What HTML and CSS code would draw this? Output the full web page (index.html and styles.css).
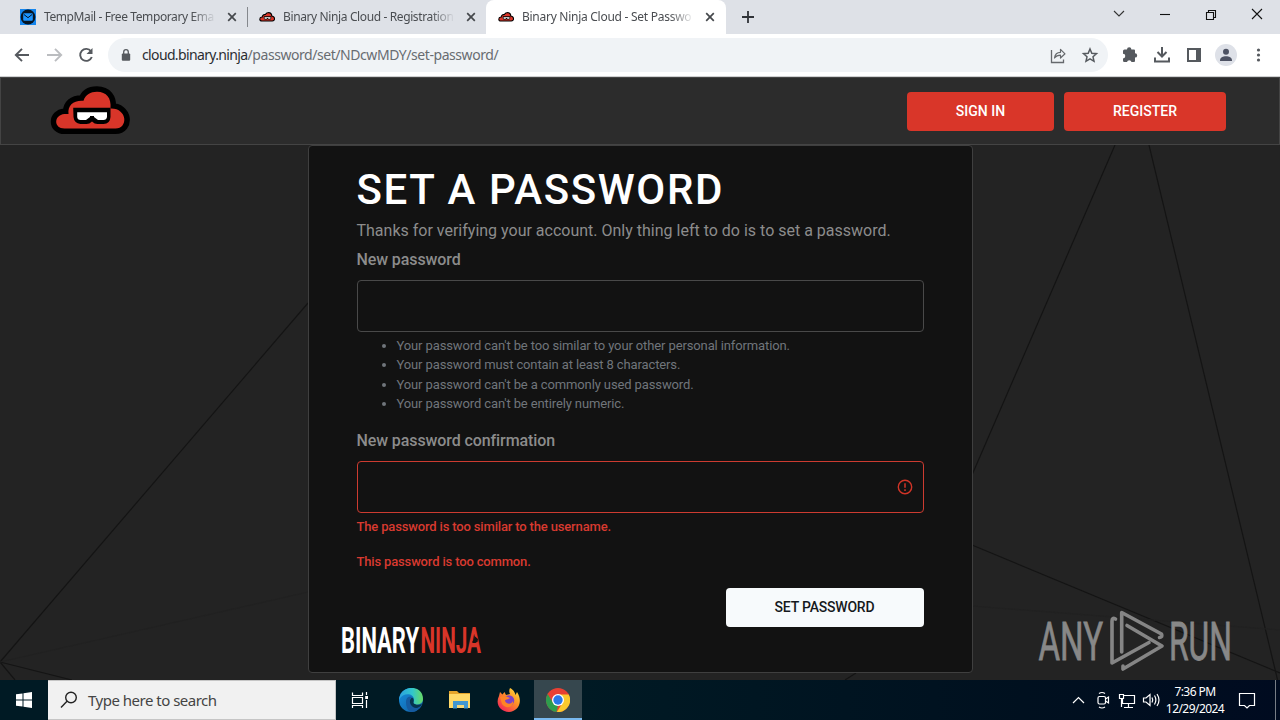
FILE: index.html
```html
<!DOCTYPE html>
<html lang="en">
<head>
<meta charset="utf-8">
<title>Binary Ninja Cloud - Set Password</title>
<link rel="stylesheet" href="styles.css">
</head>
<body>
<svg class="defs" width="0" height="0">
  <symbol id="cloud" viewBox="0 0 80 50">
    <path d="M15 42.500C4 42.500 4 29 15 28H19C18 19 24 14 34 14.700C36 8.500 41 5.700 47.500 5.700C57 5.700 62 12 61 22.500C78 22 79 42.500 66 42.500Z" fill="#d93529" stroke="#000" stroke-width="11" paint-order="stroke" stroke-linejoin="round"/>
    <path d="M23.700 21.700H61V31Q60.500 38 54 38H48Q45 38 42.500 35.500Q40 38 37 38H31Q24.500 37 24 31Z" fill="#000"/>
    <path d="M27.700 26.300H57.500V31Q57 34 54 34H48.500L44.500 31V30H40.500V31L36.500 34H31Q28 34 27.700 31Z" fill="#fff"/>
  </symbol>
  <symbol id="x" viewBox="0 0 10 10"><path d="M1.2 1.2L8.8 8.8M8.8 1.2L1.2 8.8" stroke="#45484c" stroke-width="1.7"/></symbol>
</svg>

<div class="tabs">
  <div class="tab first"><svg class="fav" viewBox="0 0 16 16"><path d="M0 0H16V16H0Z" fill="#1686ee"/><circle cx="8" cy="8" r="7.4" fill="#071523"/><rect x="3.2" y="4.3" width="9.6" height="7.4" rx="1" fill="#1c94ff"/><path d="M3.7 5.3L8 8.7L12.3 5.3" fill="none" stroke="#071523"/></svg><span class="tab-title t1">TempMail - Free Temporary Ema</span><svg class="close"><use href="#x"/></svg></div>
  <i class="divider"></i>
  <div class="tab"><svg class="fav"><use href="#cloud"/></svg><span class="tab-title t2">Binary Ninja Cloud - Registration</span><svg class="close"><use href="#x"/></svg></div>
  <div class="tab active"><svg class="fav"><use href="#cloud"/></svg><span class="tab-title t3">Binary Ninja Cloud - Set Passwo</span><svg class="close"><use href="#x"/></svg></div>
  <svg class="plus" viewBox="0 0 12 12"><path d="M6 0V12M0 6H12" stroke="#303338" stroke-width="1.8"/></svg>
  <svg class="winctl" viewBox="0 0 160 24" fill="none" stroke="#111" stroke-width="1.1"><path d="M4 9L9 14L14 9" stroke="#333"/><path d="M50 12.5H60"/><path d="M96.500 10.500H103.500V17.500H96.500ZM98.500 10.500V8.500H105.500V15.500H103.500"/><path d="M142 7L152 17M152 7L142 17"/></svg>
</div>

<div class="toolbar">
  <svg class="nav" viewBox="0 0 100 24" fill="none" stroke-width="1.9"><path d="M21 12H8M14 5.800L7.800 12L14 18.200" stroke="#55595e"/><path d="M39 12H53M47 5.800L53.200 12L47 18.200" stroke="#bbbdc0"/><path d="M83 8.300A6 6 0 1 0 83.800 14" stroke="#55595e"/><path d="M84.500 5V11H78.500Z" fill="#55595e"/></svg>
  <div class="omnibox">
    <svg class="lock" viewBox="0 0 10 12"><rect x=".8" y="4.500" width="8.400" height="7.300" rx="1" fill="#55595e"/><path d="M2.700 5V3A2.300 2.300 0 0 1 7.300 3V5" fill="none" stroke="#55595e" stroke-width="1.300"/></svg>
    <span class="url"><b>cloud.binary.ninja</b>/password/set/NDcwMDY/set-password/</span>
    <svg class="oicons" viewBox="0 0 50 20"><path d="M1.500 5V17.500H13.500V14.500" fill="none" stroke="#66696d" stroke-width="1.300"/><path d="M4.500 13C5 9 8 7.300 10.500 7.300V4.300L15 8.800L10.500 13V10.200C8 10.200 6 11 4.500 13Z" fill="none" stroke="#66696d" stroke-width="1.200" stroke-linejoin="round"/><path d="M40 4L41.800 8.300L46.500 8.700L43 11.800L44 16.300L40 13.900L36 16.300L37 11.800L33.500 8.700L38.200 8.300Z" fill="none" stroke="#55595e" stroke-width="1.500"/></svg>
  </div>
  <svg class="tools" viewBox="0 0 150 24"><path d="M1 8Q1 6.500 2.500 6.500H5A2.200 2.200 0 0 1 9.400 6.500H12Q13 6.500 13 7.500V10.200A2.200 2.200 0 0 1 13 14.600V18Q13 19 12 19H9.500A2.300 2.300 0 0 0 5 19H2.300Q1 19 1 17.500V15.400A2.300 2.300 0 0 0 1 10.800Z" fill="#55595e"/><g fill="none" stroke="#55595e" stroke-width="2"><path d="M40 4V13M35.500 9L40 13.500L44.500 9"/><path d="M33 14.500V18.500H47V14.500"/><path d="M66 6H78V18H66Z"/></g><path d="M74 5H79V19H74Z" fill="#55595e"/><circle cx="104" cy="12" r="11" fill="#dee1e8"/><circle cx="104" cy="8.800" r="3" fill="#4d5263"/><path d="M98 17.500C98 14.500 101 13.300 104 13.300S110 14.500 110 17.500V18H98Z" fill="#4d5263"/><g fill="#55595e"><circle cx="136.500" cy="7" r="1.600"/><circle cx="136.500" cy="12" r="1.600"/><circle cx="136.500" cy="17" r="1.600"/></g></svg>
</div>

<header class="site-header">
  <svg class="brand"><use href="#cloud"/></svg>
  <div class="actions"><a class="btn signin">SIGN IN</a><a class="btn register">REGISTER</a></div>
</header>

<main class="page">
  <svg class="mesh" viewBox="0 145 1280 535" fill="none" stroke="#141414" stroke-width="1.200"><path d="M308 303L0 662L72 680M0 662L15 680M1115 145L972 475M1149 145L1280 690M972 545L1280 673M856 673L845 680"/><path d="M0 662L308 592M972 606L1280 630" stroke="#212121"/></svg>
  <section class="card">
    <h1>SET A PASSWORD</h1>
    <p class="lead">Thanks for verifying your account. Only thing left to do is to set a password.</p>
    <label>New password</label>
    <div class="input"></div>
    <ul><li>Your password can't be too similar to your other personal information.</li><li>Your password must contain at least 8 characters.</li><li>Your password can't be a commonly used password.</li><li>Your password can't be entirely numeric.</li></ul>
    <label>New password confirmation</label>
    <div class="input invalid"><svg viewBox="0 0 16 16"><circle cx="8" cy="8" r="6.700" fill="none" stroke="#d13427" stroke-width="1.400"/><path d="M8 4.300V8.800M8 10.300V12" stroke="#d13427" stroke-width="1.500"/></svg></div>
    <p class="error">The password is too similar to the username.</p>
    <p class="error second">This password is too common.</p>
    <div class="submit-row"><a class="submit">SET PASSWORD</a></div>
    <svg class="wordmark" viewBox="0 0 142 30"><text x="0" y="28" textLength="78" lengthAdjust="spacingAndGlyphs" fill="#fff">BINARY</text><text x="79.500" y="28" textLength="60.500" lengthAdjust="spacingAndGlyphs" fill="#d93529">NINJA</text><path d="M131 17L134 14L133.500 11L137 14L136.500 17L133 18Z" fill="#121212"/></svg>
  </section>
  <svg class="anyrun" viewBox="1036 606 200 68"><g fill="#888" stroke="#888" stroke-width=".8"><text x="1038.500" y="659.500" textLength="64.500" lengthAdjust="spacingAndGlyphs">ANY</text><text x="1169" y="659.500" textLength="63" lengthAdjust="spacingAndGlyphs">RUN</text></g><g fill="none" stroke="#858585" stroke-width="3.600" stroke-linejoin="round" stroke-linecap="round"><path d="M1115.500 619Q1112 617 1112 621V663L1149 642.500"/><path d="M1121.700 652V612.500L1161.500 634Q1163 637 1159.500 637.500M1127 625.500L1162 646L1123 669V666"/></g></svg>
</main>

<footer class="taskbar">
  <div class="start"><svg viewBox="0 0 16 16" fill="#fff"><path d="M0 2.300L6.500 1.400V7.500H0ZM7.500 1.200L16 0V7.500H7.500ZM0 8.500H6.500V14.600L0 13.700ZM7.500 8.500H16V16L7.500 14.800Z"/></svg></div>
  <div class="search"><svg viewBox="0 0 18 18" fill="none" stroke="#222" stroke-width="1.400"><circle cx="11" cy="6.500" r="5.300"/><path d="M7 10.300L1 16.500"/></svg><span>Type here to search</span></div>
  <div class="app task-view"><svg viewBox="0 0 24 24" fill="none" stroke="#fff" stroke-width="1.200"><path d="M4.500 4.500V7.500H14.500V4.500M4.500 9.500H14.500V15.500H4.500ZM4.500 20V17.500H14.500V20M18.500 4V7M18.500 12V20"/><path d="M17.200 8H20V11H17.200Z" fill="#fff" stroke="none"/></svg></div>
  <div class="app"><svg viewBox="0 0 24 24"><defs><linearGradient id="edgeTop" x1="0" x2="1"><stop stop-color="#2c9fe0"/><stop offset=".55" stop-color="#31c6cd"/><stop offset="1" stop-color="#68db62"/></linearGradient><linearGradient id="edgeLow" x1="0" x2="1" y2="1"><stop stop-color="#168fdf"/><stop offset="1" stop-color="#115c9f"/></linearGradient></defs><circle cx="12" cy="12" r="12" fill="url(#edgeLow)"/><path d="M0 12C1-4 24-4 24 11C24 16 18 18 14.500 15.800C13.500 15 15 14 15 12C15 5 4 4 0 12Z" fill="url(#edgeTop)"/><path d="M14.800 15.500C18 17.600 21 16.800 23 15.800C22 19 19 21 16 20.500C9 20 9 12 13 9.500C16 11 14 14 14.800 15.500Z" fill="#06344f"/><path d="M7 14C7 9 10 8 13 9C10 11 10 16 14 19C18 22 21 18 22 18C19 23 15 24 12 24C9 23 7 19 7 14Z" fill="#165ba0"/></svg></div>
  <div class="app"><svg viewBox="0 0 24 24"><path d="M1 3H9L11 5H22V20H1Z" fill="#e5a52b"/><path d="M1 6H22V20H1Z" fill="#ffd968"/><path d="M5 13H20V20.500H16V17H9V20.500H5Z" fill="#4197d1"/><path d="M9 17H16V20H9Z" fill="#f5d778"/></svg></div>
  <div class="app"><svg viewBox="0 0 24 24"><defs><linearGradient id="fox" x1="1" y1="0" x2=".2" y2="1"><stop stop-color="#ffed46"/><stop offset=".45" stop-color="#ff9526"/><stop offset="1" stop-color="#f32159"/></linearGradient></defs><path d="M13 0C17 2 18 5 18.500 7L20 4C27 15 20 24 12 24C3 24-2 16 2 8L3 4L5.500 6.500L7.500 4L9 7L13 6C12 4 12 2 13 0Z" fill="url(#fox)"/><circle cx="12" cy="12.500" r="5.200" fill="#7d42c7"/><path d="M3 9C6 7 9 8 13 10C11 12 8 11 8 13C10 17 15 16 16 13C17 20 8 21 5 16Z" fill="#ff8426"/></svg></div>
  <div class="app current"><svg viewBox="0 0 24 24"><circle cx="12" cy="12" r="12" fill="#e84033"/><path d="M1.600 6L7.200 15L12 17.500L10.500 24A12 12 0 0 1 1.600 6Z" fill="#2e9d4d"/><path d="M12 6.500H22.700A12 12 0 0 1 10.800 24L16.700 14.800Z" fill="#fbc92d"/><circle cx="12" cy="12" r="6" fill="#fff"/><circle cx="12" cy="12" r="4.700" fill="#2978e8"/></svg></div>
  <div class="tray">
    <svg class="trayicons" viewBox="0 0 94 24" fill="none" stroke="#fff" stroke-width="1.200"><path d="M3 15L8.500 9.500L14 15"/><rect x="28" y="8.500" width="7.500" height="7.500" rx="1.500"/><path d="M35.500 11L38.500 9V15L35.500 13M29 5.500Q32 3.500 35 5.500M29 19Q32 21 35 19"/><path d="M53 7.500H64.500V15.500H52.500V11M58.500 15.500V19M54 19.500H63M49.500 6.500H53.500V10.500H49.500ZM51.500 11V19"/><path d="M73.500 10H76L80 6.500V17.500L76 14H73.500Z"/><path d="M82 9.500Q83.500 12 82 14.500M84.500 7.500Q87.200 12 84.500 16.500M87 6Q91 12 87 18"/></svg>
    <div class="clock"><span class="time">7:36 PM</span><span class="date">12/29/2024</span></div>
    <svg class="note" viewBox="0 0 18 18"><path d="M1.500 2.500H16.500V14.500H11.500L9 17L6.500 14.500H1.500Z" fill="none" stroke="#fff" stroke-width="1.200"/></svg>
  </div>
</footer>
</body>
</html>
```
FILE: styles.css
```css
* { box-sizing: border-box; }
body { margin: 0; width: 1280px; height: 720px; overflow: hidden; display: flex; flex-direction: column; background: #232323; font-family: Roboto, sans-serif; }
svg { display: block; flex-shrink: 0; }
.defs { position: absolute; }

.tabs { height: 34px; flex-shrink: 0; background: #dee1e7; display: flex; padding-left: 8px; font-family: "Noto Sans", sans-serif; }
.tab { width: 239px; height: 34px; display: flex; align-items: center; padding: 0 11px 0 12px; }
.tab.first { width: 240px; }
.tab.active { width: 240px; background: #fff; border-radius: 8px 8px 0 0; }
.divider { width: 1px; height: 20px; margin: 7px 0 0 -1px; background: #85888d; }
.tab.first + .divider + .tab { width: 238px; padding-left: 11px; padding-right: 10px; }
.fav { width: 16px; height: 16px; margin-right: 8px; }
.tab-title { width: 172px; overflow: hidden; white-space: nowrap; font-size: 12px; color: #4a4d51; line-height: 18px; margin-right: 11px; -webkit-mask-image: linear-gradient(90deg, #000 86%, transparent); mask-image: linear-gradient(90deg, #000 86%, transparent); }
.t1 { letter-spacing: -.4px; }
.t2 { letter-spacing: -.38px; }
.t3 { letter-spacing: -.27px; }
.close { width: 10px; height: 10px; }
.plus { width: 12px; height: 12px; margin: 11px 0 0 16px; }
.winctl { width: 160px; height: 24px; margin: 2px 10px 0 auto; }

.toolbar { height: 43px; flex-shrink: 0; background: #fff; border-bottom: 1px solid #cfd0d1; display: flex; align-items: center; padding-left: 8px; }
.nav { width: 100px; height: 24px; }
.omnibox { width: 1000px; height: 34px; border-radius: 17px; background: #f0f3f6; display: flex; align-items: center; padding-left: 13px; }
.lock { width: 10px; height: 12px; }
.url { font: 14px/20px "Noto Sans", sans-serif; color: #686c71; margin-left: 11px; letter-spacing: -.44px; white-space: nowrap; }
.url b { font-weight: 400; color: #2b2d31; letter-spacing: -.64px; }
.oicons { width: 50px; height: 20px; margin-left: auto; margin-right: 8px; }
.tools { width: 150px; height: 24px; margin-left: 14px; }

.site-header { height: 68px; flex-shrink: 0; background: #2c2c2c; border: 1px solid #444; display: flex; align-items: center; justify-content: space-between; padding: 0 53px 0 48px; }
.brand { width: 81px; height: 50px; }
.actions { display: flex; gap: 10px; }
.btn { height: 39px; border-radius: 4px; background: #d93629; color: #fff; font-size: 14px; font-weight: 500; display: flex; align-items: center; justify-content: center; }
.signin { width: 147px; }
.register { width: 162px; }

.page { position: relative; height: 535px; flex-shrink: 0; background: #232323; display: flex; justify-content: center; }
.mesh { position: absolute; inset: 0; width: 1280px; height: 535px; }
.card { position: relative; width: 665px; height: 528px; background: #121212; border: 1px solid #3f3f3f; border-radius: 4px; padding: 19px 48px 0; color: #8c8c8c; }
h1 { margin: 0; font-size: 42px; line-height: 50px; font-weight: 500; letter-spacing: 1.6px; color: #fff; white-space: nowrap; }
.lead { margin: 4px 0 5px; font-size: 16px; line-height: 24px; white-space: nowrap; }
label { display: block; font-size: 16px; line-height: 24px; font-weight: 500; letter-spacing: -.1px; margin-bottom: 8px; }
.input { width: 567px; height: 52px; border: 1px solid #494949; border-radius: 4px; }
ul { margin: 4px 0 15px; padding-left: 40px; font-size: 13px; line-height: 19.400px; color: #70757b; letter-spacing: -.12px; }
.invalid { border-color: #cd3b30; display: flex; justify-content: flex-end; align-items: center; padding-right: 10px; }
.invalid svg { width: 16px; height: 16px; }
.error { margin: 4px 0 15px; font-size: 13px; line-height: 20px; color: #d83a30; font-weight: 500; letter-spacing: -.16px; }
.second { margin-bottom: 16px; }
.submit-row { display: flex; justify-content: flex-end; }
.submit { width: 198px; height: 39px; border-radius: 4px; background: #f7fafc; color: #16191d; font-size: 14px; font-weight: 500; letter-spacing: -.2px; display: flex; align-items: center; justify-content: center; }
.wordmark { width: 142px; height: 30px; margin-left: -16px; margin-top: -2px; overflow: visible; font-family: Roboto, sans-serif; font-weight: 700; font-size: 36.500px; }
.anyrun { position: absolute; left: 1036px; top: 461px; width: 200px; height: 68px; overflow: visible; font-family: Roboto, sans-serif; font-size: 53px; }

.taskbar { height: 40px; flex-shrink: 0; display: flex; background: linear-gradient(90deg, #001a24 0 45%, #00101f 80%, #000b20); }
.start { width: 48px; display: flex; align-items: center; justify-content: center; }
.start svg { width: 16px; height: 16px; }
.search { width: 288px; background: #f1f1f1; border: 1px solid #c5c5c5; border-left: 0; display: flex; align-items: center; padding-left: 12px; color: #444; font: 15px "Noto Sans", sans-serif; letter-spacing: -.5px; }
.search svg { width: 18px; height: 18px; margin-right: 10px; }
.app { width: 49px; display: flex; align-items: center; justify-content: center; }
.task-view { width: 50px; padding-right: 2px; }
.app svg { width: 24px; height: 24px; }
.current { width: 48px; margin-left: 1px; background: #36474e; border-bottom: 2px solid #79b9ef; padding-top: 2px; }
.tray { margin-left: auto; width: 206px; display: flex; align-items: center; border-right: 1px solid #777d86; margin-right: 4px; color: #fff; }
.trayicons { width: 94px; height: 24px; }
.clock { width: 62px; display: flex; flex-direction: column; align-items: center; font: 12px/17px "Noto Sans", sans-serif; letter-spacing: -.55px; }
.note { width: 18px; height: 18px; margin-left: 12px; }
```
